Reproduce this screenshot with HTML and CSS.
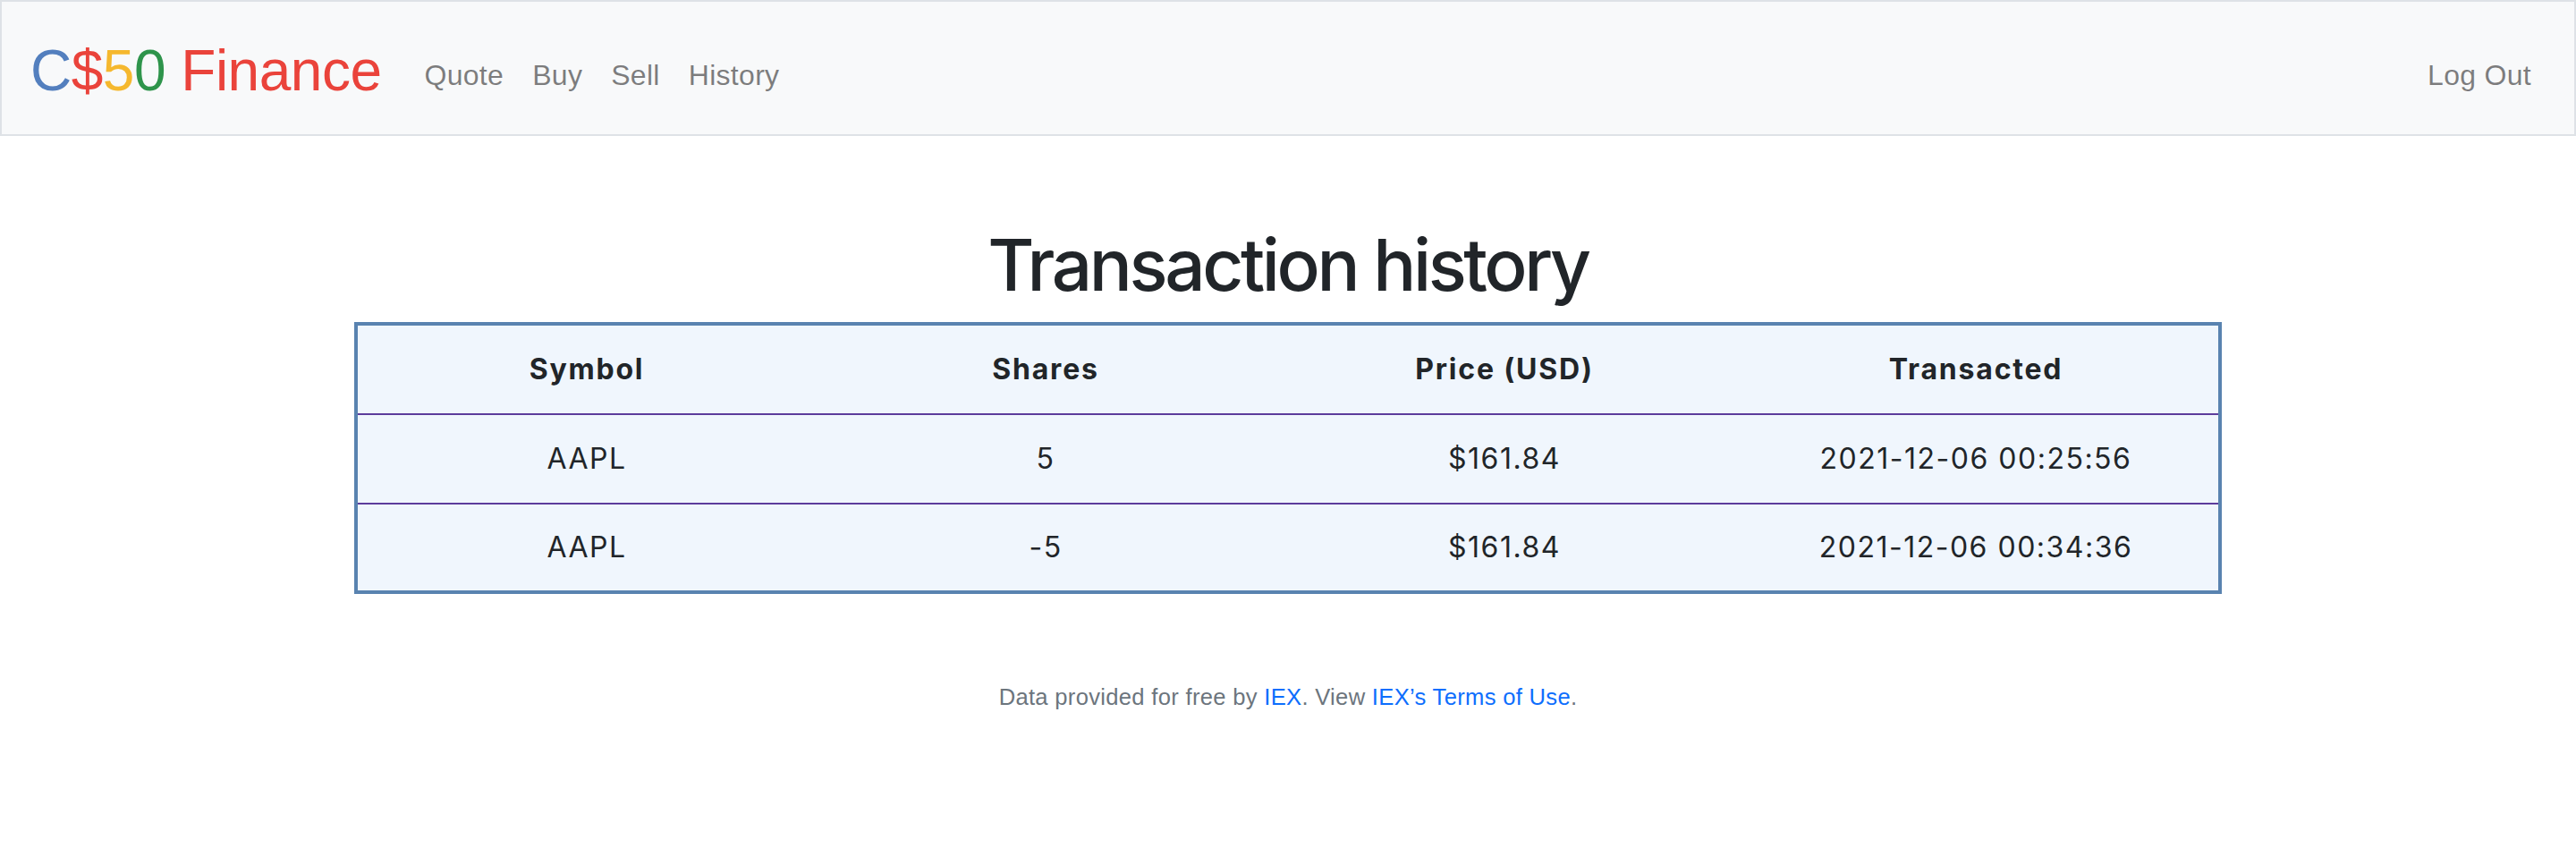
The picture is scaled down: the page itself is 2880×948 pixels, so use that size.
FILE: index.html
```html
<!DOCTYPE html>
<html lang="en">
<head>
<meta charset="utf-8">
<title>C$50 Finance: History</title>
<link rel="stylesheet" href="styles.css">
</head>
<body>
<nav class="navbar">
  <a class="brand" href="#"><span class="blue">C</span><span class="red">$</span><span class="yellow">5</span><span class="green">0</span> <span class="red">Finance</span></a>
  <ul class="nav-list">
    <li><a class="nav-link" href="#">Quote</a></li>
    <li><a class="nav-link" href="#">Buy</a></li>
    <li><a class="nav-link" href="#">Sell</a></li>
    <li><a class="nav-link" href="#">History</a></li>
  </ul>
  <ul class="nav-list nav-right">
    <li><a class="nav-link" href="#">Log Out</a></li>
  </ul>
</nav>
<main class="main">
  <h1 class="title">Transaction history</h1>
  <table class="history">
    <colgroup>
      <col class="c1"><col class="c2"><col class="c3"><col class="c4">
    </colgroup>
    <thead>
      <tr><th>Symbol</th><th>Shares</th><th>Price (USD)</th><th>Transacted</th></tr>
    </thead>
    <tbody>
      <tr class="row-first"><td>AAPL</td><td>5</td><td>$161.84</td><td>2021-12-06 00:25:56</td></tr>
      <tr class="row-last"><td>AAPL</td><td>-5</td><td>$161.84</td><td>2021-12-06 00:34:36</td></tr>
    </tbody>
  </table>
</main>
<footer class="footer">
  Data provided for free by <a class="link" href="#">IEX</a>. View <a class="link" href="#">IEX’s Terms of Use</a>.
</footer>
</body>
</html>
```
FILE: styles.css
```css
* { box-sizing: border-box; }
html, body { margin: 0; padding: 0; }
body {
  font-family: "Liberation Sans", Arial, sans-serif;
  font-size: 32px;
  line-height: 1.5;
  color: #212529;
  background: #fff;
}
a { text-decoration: none; }

.navbar {
  display: flex;
  align-items: center;
  background: #f8f9fa;
  border: 2px solid #dee2e6;
  padding: 16px 32px;
}
.brand {
  font-size: 64px;
  line-height: 96px;
  padding: 13px 0 7px 0;
  margin-right: 32px;
  white-space: nowrap;
  letter-spacing: -0.5px;
}
.blue { color: #537fbe; }
.red { color: #ea433b; }
.yellow { color: #f5b82e; }
.green { color: #2e944b; }

.nav-list {
  display: flex;
  list-style: none;
  margin: 16px 0 0 0;
  padding: 0;
}
.nav-right { margin-left: auto; }
.nav-link {
  display: block;
  padding: 16px;
  line-height: 48px;
  color: rgba(0, 0, 0, 0.5);
  letter-spacing: 0.3px;
}

.main {
  width: 2280px;
  margin: 0 auto;
  padding: 96px;
  text-align: center;
}
.title {
  font-family: Inter, "Liberation Sans", sans-serif;
  font-size: 80px;
  font-weight: 500;
  line-height: 1.2;
  margin: 0 0 16px 0;
  letter-spacing: -3.4px;
}
.history {
  width: 100%;
  border-collapse: separate;
  border-spacing: 0;
  border: 4px solid #5983b0;
  background: #f0f6fd;
  table-layout: fixed;
  font-family: Inter, "Liberation Sans", sans-serif;
}
.c1 { width: 512px; }
.c2 { width: 514px; }
.c3 { width: 512px; }
.c4 { width: 542px; }
.history th, .history td {
  text-align: center;
  line-height: 48px;
  padding: 25px 24px 25px 24px;
  letter-spacing: 1.5px;
}
.history th {
  font-weight: 700;
  letter-spacing: 1.8px;
  border-bottom: 2px solid #5c3c9c;
}
.row-first td { border-bottom: 2px solid #5c3c9c; }
.row-last td { padding: 24px; }

.footer {
  text-align: center;
  font-size: 25.6px;
  line-height: 1.5;
  color: #6c757d;
  margin-bottom: 96px;
  letter-spacing: 0.3px;
}
.link { color: #0d6efd; }
```
